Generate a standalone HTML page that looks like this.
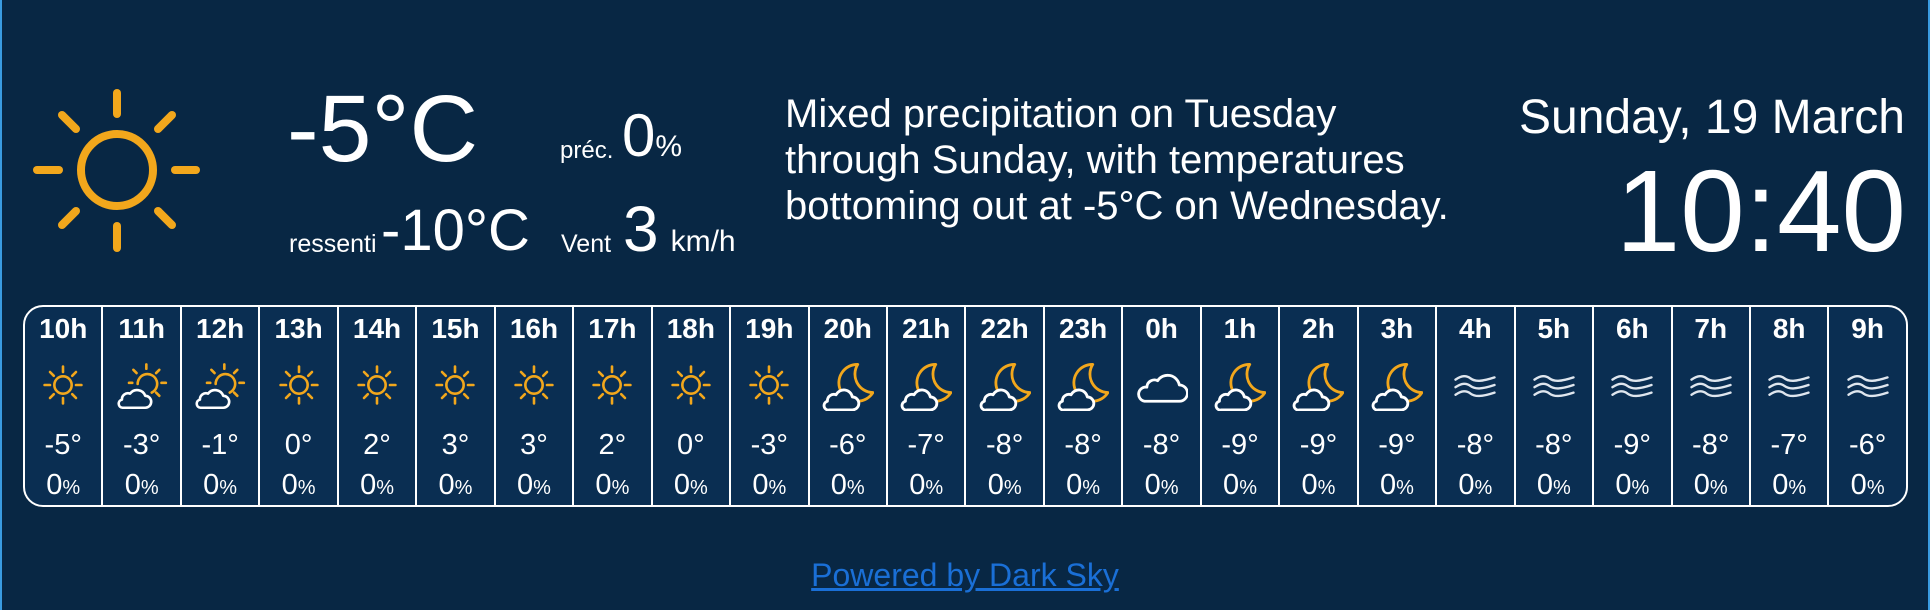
<!DOCTYPE html>
<html><head><meta charset="utf-8"><style>
html,body{margin:0;padding:0}
body{width:1930px;height:610px;background:#082744;position:relative;overflow:hidden;font-family:"Liberation Sans",Arial,sans-serif;color:#fff}
.edge{position:absolute;top:0;width:2px;height:610px;background:#3a9be0}
.a{position:absolute;white-space:nowrap;line-height:1}
#tbl{position:absolute;left:23px;top:305px;width:1881px;height:198px;border:2px solid #fff;border-radius:20px;overflow:hidden;display:flex;background:#0a2e52}
.c{flex:1;border-left:2px solid #fff;position:relative;text-align:center}
.c:first-child{border-left:none}
.h{position:absolute;top:6px;left:0;right:0;font-weight:bold;font-size:28px}
.ic{position:absolute;top:52px;left:50%;margin-left:-26px;width:52px;height:52px}
.t{position:absolute;top:122px;left:0;right:0;font-size:29px}
.p{position:absolute;top:162px;left:0;right:0;font-size:29px}
.p small{font-size:20px}
a{color:#1a6fd6;text-decoration:underline}
</style></head><body>
<div class="edge" style="left:0"></div><div class="edge" style="right:0"></div>
<svg style="position:absolute;left:32px;top:88px" width="168" height="168" viewBox="0 0 168 168">
<g stroke="#f2a71c" stroke-width="8" stroke-linecap="round" fill="none">
<circle cx="85" cy="82" r="36"/>
<line x1="85" y1="5" x2="85" y2="26"/><line x1="85" y1="138" x2="85" y2="160"/>
<line x1="5" y1="82" x2="27" y2="82"/><line x1="143" y1="82" x2="164" y2="82"/>
<line x1="30" y1="27" x2="44" y2="41"/><line x1="140" y1="27" x2="126" y2="41"/>
<line x1="30" y1="137" x2="44" y2="123"/><line x1="140" y1="137" x2="126" y2="123"/>
</g></svg>
<div class="a" style="left:287px;top:82px;font-size:95px">-5°C</div>
<div class="a" style="left:560px;top:139px;font-size:24px">préc.</div>
<div class="a" style="left:622px;top:106px;font-size:60px">0<span style="font-size:30px">%</span></div>
<div class="a" style="left:289px;top:232px;font-size:25px">ressenti</div>
<div class="a" style="left:381px;top:202px;font-size:58px">-10°C</div>
<div class="a" style="left:561px;top:232px;font-size:25px">Vent</div>
<div class="a" style="left:623px;top:197px;font-size:64px">3<span style="font-size:30px;margin-left:12px">km/h</span></div>
<div class="a" style="left:785px;top:91px;font-size:40px;line-height:46px;white-space:normal;width:800px">Mixed precipitation on Tuesday<br>through Sunday, with temperatures<br>bottoming out at -5°C on Wednesday.</div>
<div class="a" style="right:25px;top:94px;font-size:48px">Sunday, 19 March</div>
<div class="a" style="right:24px;top:153px;font-size:116px">10:40</div>
<svg width="0" height="0" style="position:absolute"><defs>
<g id="sun" fill="none" stroke="#f2a71c" stroke-width="2.4" stroke-linecap="round">
<circle cx="24" cy="24" r="8"/>
<line x1="24" y1="7" x2="24" y2="12"/><line x1="24" y1="36" x2="24" y2="41"/>
<line x1="7" y1="24" x2="12" y2="24"/><line x1="36" y1="24" x2="41" y2="24"/>
<line x1="12" y1="12" x2="15.5" y2="15.5"/><line x1="36" y1="12" x2="32.5" y2="15.5"/>
<line x1="12" y1="36" x2="15.5" y2="32.5"/><line x1="36" y1="36" x2="32.5" y2="32.5"/>
</g>
<g id="pc">
<g fill="none" stroke="#f2a71c" stroke-width="2.4" stroke-linecap="round">
<path d="M20 23 A9 9 0 1 1 33 31"/>
<line x1="28" y1="5" x2="28" y2="9"/><line x1="42" y1="22" x2="46" y2="22"/>
<line x1="16" y1="10" x2="19" y2="13"/><line x1="40" y1="10" x2="37" y2="13"/>
<line x1="40" y1="34" x2="37" y2="31"/><line x1="12" y1="22" x2="15" y2="22"/>
</g>
<path d="M6 45 h21 a5.5 5.5 0 0 0 0-11 a8 8 0 0 0-14-2 a5.5 5.5 0 0 0-7.5 5.5 a3.8 3.8 0 0 0 0.5 7.5z" fill="#0a2e52" stroke="#fff" stroke-width="2.4" stroke-linejoin="round"/>
</g>
<g id="mc">
<path d="M33 5 A17 17 0 1 0 47 31 A17 17 0 0 1 33 5 Z" fill="none" stroke="#f2a71c" stroke-width="2.6" stroke-linejoin="round"/>
<path d="M7 47 h21 a6 6 0 0 0 0-12 a8 8 0 0 0-15-2 a6 6 0 0 0-8 6 a4 4 0 0 0 2 8z" fill="#0a2e52" stroke="#fff" stroke-width="2.6" stroke-linejoin="round"/>
</g>
<g id="cl"><path d="M8 39 h32 a7.5 7.5 0 0 0 0-15 a11 11 0 0 0-20-4 a7 7 0 0 0-10 6 a6.5 6.5 0 0 0-2 13z" fill="none" stroke="#fff" stroke-width="2.6" stroke-linejoin="round"/></g>
<g id="fg" fill="none" stroke="#dfe6ee" stroke-width="2.2" stroke-linecap="round">
<path d="M6 19 c6-4 10-4 14-1 s10 3 22-1"/><path d="M6 26 c6-4 10-4 14-1 s10 3 22-1"/><path d="M6 33 c6-4 10-4 14-1 s10 3 22-1"/>
</g>
</defs></svg>
<div id="tbl">
<div class="c"><div class="h">10h</div><svg class="ic" viewBox="0 0 48 48"><use href="#sun"/></svg><div class="t">-5°</div><div class="p">0<small>%</small></div></div>
<div class="c"><div class="h">11h</div><svg class="ic" viewBox="0 0 48 48"><use href="#pc"/></svg><div class="t">-3°</div><div class="p">0<small>%</small></div></div>
<div class="c"><div class="h">12h</div><svg class="ic" viewBox="0 0 48 48"><use href="#pc"/></svg><div class="t">-1°</div><div class="p">0<small>%</small></div></div>
<div class="c"><div class="h">13h</div><svg class="ic" viewBox="0 0 48 48"><use href="#sun"/></svg><div class="t">0°</div><div class="p">0<small>%</small></div></div>
<div class="c"><div class="h">14h</div><svg class="ic" viewBox="0 0 48 48"><use href="#sun"/></svg><div class="t">2°</div><div class="p">0<small>%</small></div></div>
<div class="c"><div class="h">15h</div><svg class="ic" viewBox="0 0 48 48"><use href="#sun"/></svg><div class="t">3°</div><div class="p">0<small>%</small></div></div>
<div class="c"><div class="h">16h</div><svg class="ic" viewBox="0 0 48 48"><use href="#sun"/></svg><div class="t">3°</div><div class="p">0<small>%</small></div></div>
<div class="c"><div class="h">17h</div><svg class="ic" viewBox="0 0 48 48"><use href="#sun"/></svg><div class="t">2°</div><div class="p">0<small>%</small></div></div>
<div class="c"><div class="h">18h</div><svg class="ic" viewBox="0 0 48 48"><use href="#sun"/></svg><div class="t">0°</div><div class="p">0<small>%</small></div></div>
<div class="c"><div class="h">19h</div><svg class="ic" viewBox="0 0 48 48"><use href="#sun"/></svg><div class="t">-3°</div><div class="p">0<small>%</small></div></div>
<div class="c"><div class="h">20h</div><svg class="ic" viewBox="0 0 48 48"><use href="#mc"/></svg><div class="t">-6°</div><div class="p">0<small>%</small></div></div>
<div class="c"><div class="h">21h</div><svg class="ic" viewBox="0 0 48 48"><use href="#mc"/></svg><div class="t">-7°</div><div class="p">0<small>%</small></div></div>
<div class="c"><div class="h">22h</div><svg class="ic" viewBox="0 0 48 48"><use href="#mc"/></svg><div class="t">-8°</div><div class="p">0<small>%</small></div></div>
<div class="c"><div class="h">23h</div><svg class="ic" viewBox="0 0 48 48"><use href="#mc"/></svg><div class="t">-8°</div><div class="p">0<small>%</small></div></div>
<div class="c"><div class="h">0h</div><svg class="ic" viewBox="0 0 48 48"><use href="#cl"/></svg><div class="t">-8°</div><div class="p">0<small>%</small></div></div>
<div class="c"><div class="h">1h</div><svg class="ic" viewBox="0 0 48 48"><use href="#mc"/></svg><div class="t">-9°</div><div class="p">0<small>%</small></div></div>
<div class="c"><div class="h">2h</div><svg class="ic" viewBox="0 0 48 48"><use href="#mc"/></svg><div class="t">-9°</div><div class="p">0<small>%</small></div></div>
<div class="c"><div class="h">3h</div><svg class="ic" viewBox="0 0 48 48"><use href="#mc"/></svg><div class="t">-9°</div><div class="p">0<small>%</small></div></div>
<div class="c"><div class="h">4h</div><svg class="ic" viewBox="0 0 48 48"><use href="#fg"/></svg><div class="t">-8°</div><div class="p">0<small>%</small></div></div>
<div class="c"><div class="h">5h</div><svg class="ic" viewBox="0 0 48 48"><use href="#fg"/></svg><div class="t">-8°</div><div class="p">0<small>%</small></div></div>
<div class="c"><div class="h">6h</div><svg class="ic" viewBox="0 0 48 48"><use href="#fg"/></svg><div class="t">-9°</div><div class="p">0<small>%</small></div></div>
<div class="c"><div class="h">7h</div><svg class="ic" viewBox="0 0 48 48"><use href="#fg"/></svg><div class="t">-8°</div><div class="p">0<small>%</small></div></div>
<div class="c"><div class="h">8h</div><svg class="ic" viewBox="0 0 48 48"><use href="#fg"/></svg><div class="t">-7°</div><div class="p">0<small>%</small></div></div>
<div class="c"><div class="h">9h</div><svg class="ic" viewBox="0 0 48 48"><use href="#fg"/></svg><div class="t">-6°</div><div class="p">0<small>%</small></div></div>
</div>
<div class="a" style="left:0;right:0;top:559px;text-align:center;font-size:32px"><a>Powered by Dark Sky</a></div>
</body></html>
